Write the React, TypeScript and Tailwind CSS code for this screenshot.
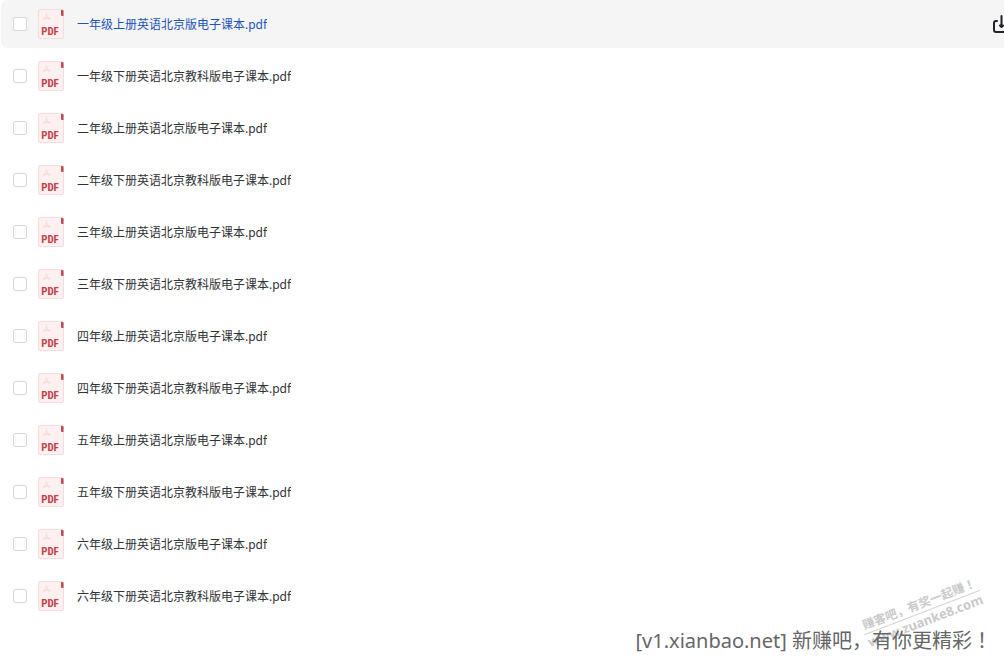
const files: string[] = [
  '一年级上册英语北京版电子课本.pdf',
  '一年级下册英语北京教科版电子课本.pdf',
  '二年级上册英语北京版电子课本.pdf',
  '二年级下册英语北京教科版电子课本.pdf',
  '三年级上册英语北京版电子课本.pdf',
  '三年级下册英语北京教科版电子课本.pdf',
  '四年级上册英语北京版电子课本.pdf',
  '四年级下册英语北京教科版电子课本.pdf',
  '五年级上册英语北京版电子课本.pdf',
  '五年级下册英语北京教科版电子课本.pdf',
  '六年级上册英语北京版电子课本.pdf',
  '六年级下册英语北京教科版电子课本.pdf',
];

function PdfIcon() {
  return (
    <span className="relative flex h-[30px] w-[26px] shrink-0 items-end justify-center">
      <svg className="absolute inset-0 h-full w-full" viewBox="0 0 26 30" aria-hidden="true">
        <rect x="0.5" y="0.5" width="25" height="29" rx="1.5" fill="#fdf0f0" stroke="#f6dcdc" />
        <path d="M23 1h1.500a1 1 0 0 1 1 1v5H24a1 1 0 0 1-1-1z" fill="#bf4a58" />
        <path
          d="M8.500 4.500c0 3-1.500 5-4 6.500M8.500 5c0 2 1.500 4 4 5M5 10.500c2-1.500 4-1.500 7-.5"
          fill="none"
          stroke="#f3d9db"
        />
      </svg>
      <span className="relative pr-[2px] pb-px font-['Liberation_Sans_Narrow','Roboto_Condensed','Roboto',sans-serif] text-[11px] leading-3 font-bold text-[#c4424a]">
        PDF
      </span>
    </span>
  );
}

function DownloadIcon() {
  return (
    <svg
      className="h-5 w-5"
      viewBox="0 0 20 20"
      fill="none"
      stroke="#222326"
      strokeWidth="2"
      strokeLinecap="round"
      strokeLinejoin="round"
      aria-hidden="true"
    >
      <path d="M5 7H4a2 2 0 0 0-2 2v7a2 2 0 0 0 2 2h11a2 2 0 0 0 2-2V9a2 2 0 0 0-2-2h-1" />
      <path d="M9.500 2v10" />
      <path d="M8 11.500h3l-1.500 1.500z" fill="#222326" />
    </svg>
  );
}

function FileRow({ name, active }: { name: string; active: boolean }) {
  return (
    <li
      className={
        active
          ? 'flex h-12 items-center rounded-l-md bg-[#f5f5f5] pl-3 text-[#1c54b8]'
          : 'flex h-12 items-center pl-3 text-[#303236]'
      }
    >
      <input
        type="checkbox"
        aria-label={name}
        className="h-[14px] w-[14px] shrink-0 appearance-none rounded-xs border border-[#d6d7da] bg-white checked:bg-[#1c54b8]"
      />
      <a href="#file" className="ml-[11px] flex min-w-0 flex-1 items-center gap-[13px]">
        <PdfIcon />
        <span className="truncate pt-[2px] text-xs">{name}</span>
      </a>
      {active && (
        <button type="button" aria-label="下载" className="-mr-2 shrink-0">
          <DownloadIcon />
        </button>
      )}
    </li>
  );
}

export default function App() {
  return (
    <main className="min-h-screen overflow-hidden bg-white font-['Noto_Sans','Noto_Sans_CJK_SC',sans-serif]">
      <ul className="flex flex-col gap-1 pl-px">
        {files.map((name, index) => (
          <FileRow key={name} name={name} active={index === 0} />
        ))}
      </ul>
      <footer className="relative flex justify-end pt-1 pr-3">
        <div className="absolute right-5 bottom-7 w-[124px] -rotate-[21deg] text-center font-bold whitespace-nowrap text-[#c9c9c9]">
          <p className="border-b border-[#d4d4d4] text-xs leading-4">
            赚客吧，有奖一起赚<span className="font-['Noto_Sans_CJK_TC',sans-serif]">！</span>
          </p>
          <p className="text-[13px] leading-4">www.zuanke8.com</p>
        </div>
        <p className="relative text-xl leading-8 text-[#666666]">
          [v1.xianbao.net] 新赚吧，有你更精彩<span className="font-['Noto_Sans_CJK_TC',sans-serif]">！</span>
        </p>
      </footer>
    </main>
  );
}
